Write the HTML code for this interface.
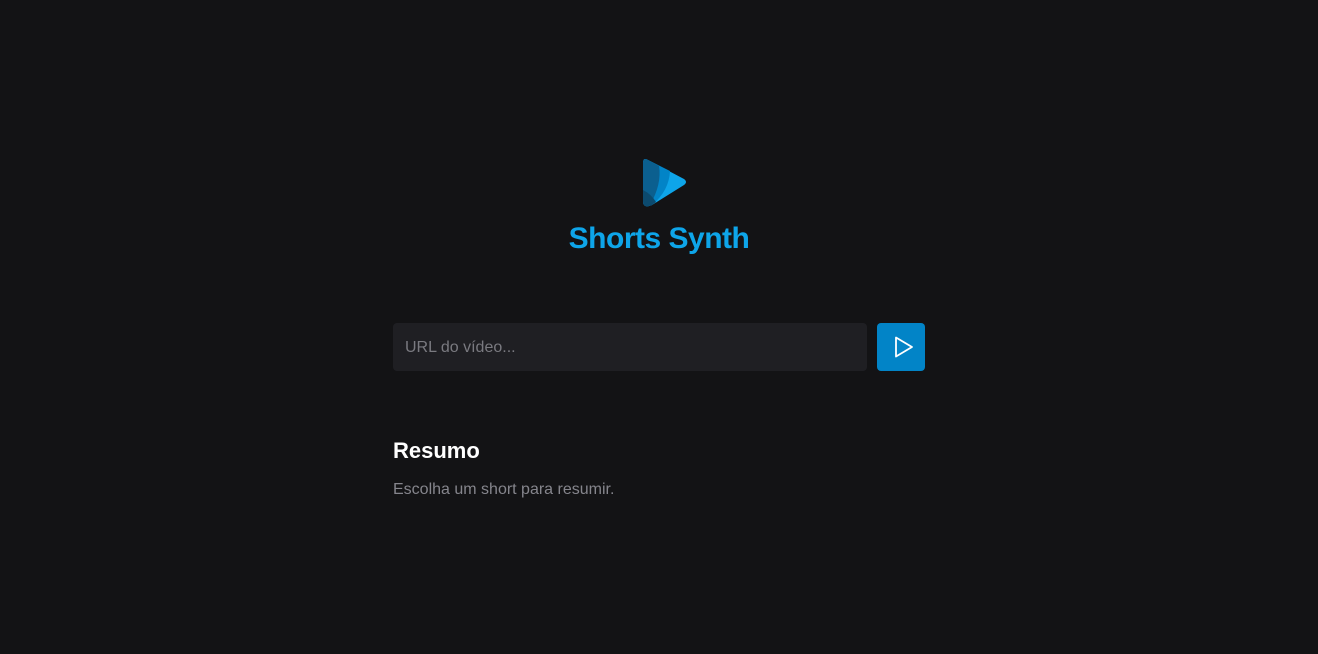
<!DOCTYPE html>
<html><head><meta charset="utf-8"><style>
body{margin:0;background:#131315;font-family:"Liberation Sans",sans-serif;width:1318px;height:654px;overflow:hidden;position:relative}
.t{position:absolute;left:0;width:1318px;top:222px;text-align:center;font-size:30px;font-weight:bold;color:#0ea5e9;letter-spacing:-0.5px}
.in{position:absolute;left:393px;top:323px;width:474px;height:48px;background:#1f1f23;border-radius:4px}
.in span{position:absolute;left:12px;top:16px;font-size:16px;color:#7a7a80}
.btn{position:absolute;left:877px;top:323px;width:48px;height:48px;background:#0284c7;border-radius:4px}
h2{position:absolute;left:393px;top:438px;margin:0;font-size:22px;color:#fff}
p{position:absolute;left:393px;top:481px;margin:0;font-size:16px;color:#85858c}
</style></head><body>
<svg style="position:absolute;left:640px;top:156px" width="48" height="54" viewBox="0 0 48 54">
<path d="M3 7 Q3 1 8 4 L44 23 Q48 26 44 29 L12 49 Q3 53 3 45 Z" fill="#0ea5e9"/>
<path d="M3 7 Q3 1 8 4 L30 15 Q29 35 12 49 Q3 53 3 45 Z" fill="#0284c7"/>
<path d="M3 7 Q3 1 8 4 L19 10 Q22 28 10 49 Q3 52 3 45 Z" fill="#0b5f8f"/>
<path d="M3 34 Q11 38 16 46 L12 49 Q3 53 3 45 Z" fill="#0c4a6e"/>
</svg>
<div class="t">Shorts Synth</div>
<div class="in"><span>URL do vídeo...</span></div>
<div class="btn"><svg width="48" height="48" viewBox="0 0 48 48"><path d="M19 14.5 L35 24 L19 33.5 Z" fill="none" stroke="#fff" stroke-width="1.8" stroke-linejoin="round"/></svg></div>
<h2>Resumo</h2>
<p>Escolha um short para resumir.</p>
</body></html>
